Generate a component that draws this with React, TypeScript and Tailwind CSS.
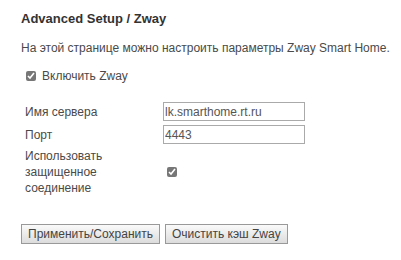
export default function App() {
  const font = { fontFamily: '"Liberation Sans", Arial, sans-serif' };
  return (
    <div className="w-[401px] h-[260px] bg-white text-[#4a4a4a] text-[12px] pl-[21px] pt-[10px]" style={font}>
      <div className="font-bold text-[13px] text-[#333] leading-[18px]">Advanced Setup / Zway</div>
      <div className="mt-[12px] leading-[16px] whitespace-nowrap">На этой странице можно настроить параметры Zway Smart Home.</div>
      <label className="mt-[12px] ml-[5px] flex items-center gap-[6px] leading-[16px]">
        <input type="checkbox" defaultChecked className="w-[10px] h-[10px] m-0 accent-[#777]" />
        <span>Включить Zway</span>
      </label>
      <div className="mt-[18px] ml-[4px] grid grid-cols-[138px_142px] gap-y-[4px] items-center">
        <div className="leading-[16px]">Имя сервера</div>
        <input defaultValue="lk.smarthome.rt.ru" className="h-[19px] border border-[#aaa] px-[1px] text-[12px] text-[#555] outline-none" style={font} />
        <div className="leading-[16px]">Порт</div>
        <input defaultValue="4443" className="h-[19px] border border-[#aaa] px-[1px] text-[12px] text-[#555] outline-none" style={font} />
        <div className="leading-[16px]">Использовать<br />защищенное<br />соединение</div>
        <div className="pl-[4px] flex items-center">
          <input type="checkbox" defaultChecked className="w-[10px] h-[10px] m-0 accent-[#777]" />
        </div>
      </div>
      <div className="mt-[28px] flex gap-[5px]">
        <button className="h-[20px] px-[6px] border border-[#999] bg-gradient-to-b from-[#fafafa] to-[#dcdcdc] text-[12px] text-[#444] leading-none" style={font}>Применить/Сохранить</button>
        <button className="h-[20px] px-[6px] border border-[#999] bg-gradient-to-b from-[#fafafa] to-[#dcdcdc] text-[12px] text-[#444] leading-none" style={font}>Очистить кэш Zway</button>
      </div>
    </div>
  );
}
